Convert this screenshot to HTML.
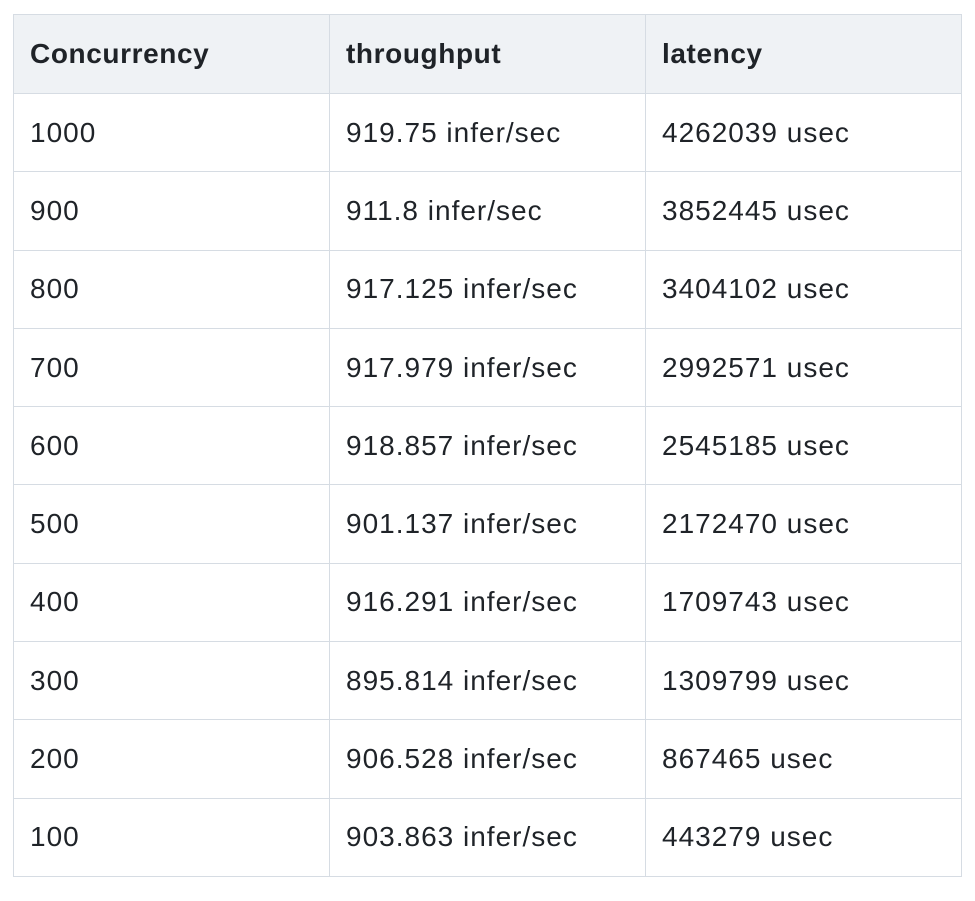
<!DOCTYPE html>
<html><head><style>
body{margin:0;background:#fff;width:975px;height:901px;overflow:hidden;font-family:"Liberation Sans",sans-serif;color:#1f2328}
table{position:absolute;left:13px;top:14px;border-collapse:collapse;table-layout:fixed;width:949px}
td,th{border:1px solid #d6dce3;padding:0 0 0 16px;text-align:left;font-size:28px;letter-spacing:1px;height:78.3px;box-sizing:border-box;white-space:nowrap}
th{background:#eff2f5;font-weight:bold;height:79px;letter-spacing:0.6px}
col{width:316px}
</style></head><body>
<table><colgroup><col><col><col></colgroup>
<tr><th>Concurrency</th><th>throughput</th><th>latency</th></tr>
<tr><td>1000</td><td>919.75 infer/sec</td><td>4262039 usec</td></tr>
<tr><td>900</td><td>911.8 infer/sec</td><td>3852445 usec</td></tr>
<tr><td>800</td><td>917.125 infer/sec</td><td>3404102 usec</td></tr>
<tr><td>700</td><td>917.979 infer/sec</td><td>2992571 usec</td></tr>
<tr><td>600</td><td>918.857 infer/sec</td><td>2545185 usec</td></tr>
<tr><td>500</td><td>901.137 infer/sec</td><td>2172470 usec</td></tr>
<tr><td>400</td><td>916.291 infer/sec</td><td>1709743 usec</td></tr>
<tr><td>300</td><td>895.814 infer/sec</td><td>1309799 usec</td></tr>
<tr><td>200</td><td>906.528 infer/sec</td><td>867465 usec</td></tr>
<tr><td>100</td><td>903.863 infer/sec</td><td>443279 usec</td></tr>
</table>
</body></html>
